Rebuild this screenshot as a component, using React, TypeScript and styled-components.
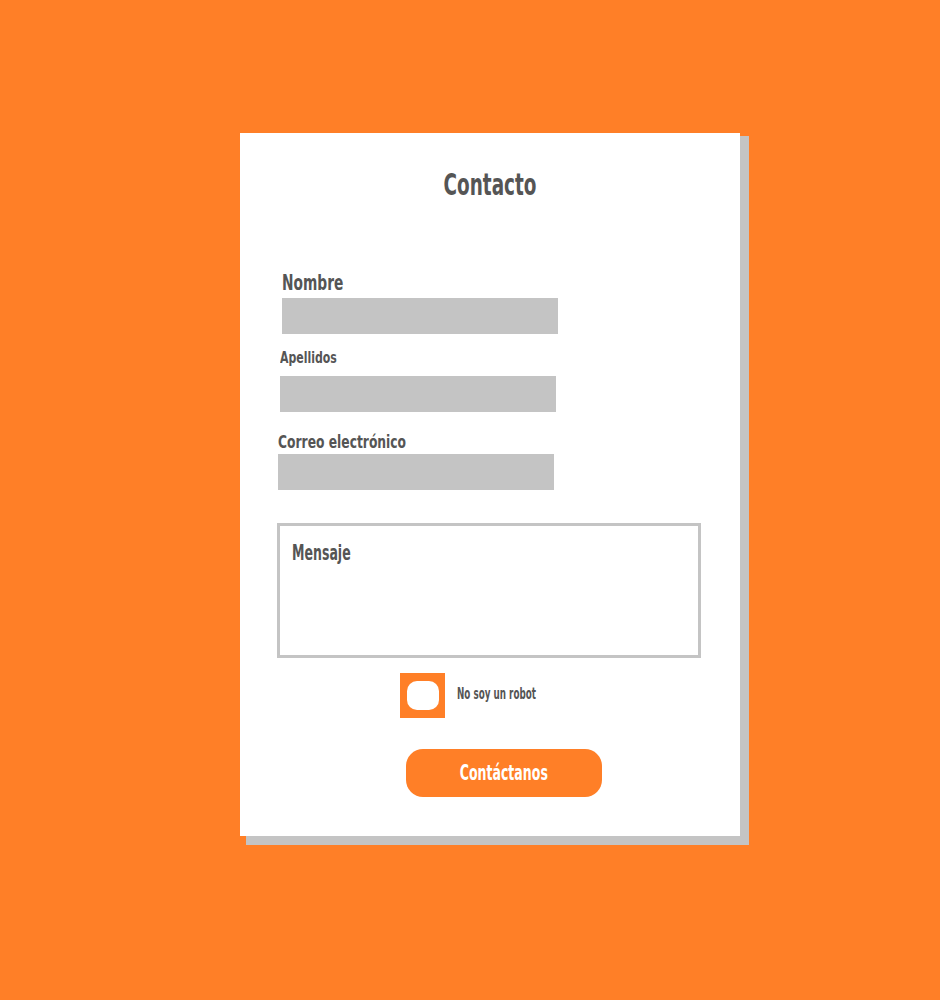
import React from "react";
import styled, { createGlobalStyle } from "styled-components";

const Global = createGlobalStyle`
  html, body { margin: 0; padding: 0; }
  body { background: #ff7f27; width: 940px; height: 1000px; overflow: hidden; }
`;

const FONT = `"DejaVu Sans Condensed", "DejaVu Sans", sans-serif`;

const Page = styled.div`
  position: relative;
  z-index: 0;
  width: 940px;
  height: 1000px;
  background: #ff7f27;
  padding-top: 133px;
  padding-left: 240px;
  box-sizing: border-box;
`;

const Card = styled.div`
  position: relative;
  width: 500px;
  height: 703px;
  background: #ffffff;
  box-sizing: border-box;
  padding-top: 36px;
  font-family: ${FONT};
  color: #555555;
  display: flex;
  flex-direction: column;
  align-items: flex-start;
  &::before {
    content: "";
    position: absolute;
    top: 3px;
    left: 6px;
    right: -9px;
    bottom: -9px;
    background: #c4c4c4;
    z-index: -1;
  }
`;

const Title = styled.h1`
  align-self: stretch;
  margin: 0;
  font-size: 31px;
  font-weight: 700;
  text-align: center;
  line-height: 1;
  transform: scaleX(0.66);
`;

const Field = styled.div<{ $x: number; $mt: number }>`
  display: flex;
  flex-direction: column;
  align-items: flex-start;
  margin-left: ${(p) => p.$x}px;
  margin-top: ${(p) => p.$mt}px;
`;

const Label = styled.label<{ $size: number; $gap: number; $sx: number }>`
  display: block;
  font-size: ${(p) => p.$size}px;
  font-weight: 700;
  line-height: 1;
  margin-bottom: ${(p) => p.$gap}px;
  transform: scaleX(${(p) => p.$sx});
  transform-origin: left center;
  white-space: nowrap;
`;

const Input = styled.div`
  width: 276px;
  height: 36px;
  background: #c4c4c4;
`;

const Message = styled.div`
  margin: 33px 0 0 37px;
  width: 424px;
  height: 135px;
  border: 3px solid #c4c4c4;
  box-sizing: border-box;
  padding: 17px 0 0 12px;
`;

const MessageLabel = styled.span`
  display: block;
  font-size: 20.5px;
  line-height: 1;
  font-weight: 700;
  transform: scaleX(0.68);
  transform-origin: left center;
`;

const RobotRow = styled.div`
  display: flex;
  align-items: center;
  margin: 15px 0 0 160px;
  gap: 12px;
`;

const CheckBox = styled.div`
  width: 45px;
  height: 45px;
  background: #ff7f27;
  display: flex;
  align-items: center;
  justify-content: center;
`;

const CheckInner = styled.div`
  width: 32px;
  height: 29px;
  border-radius: 10px;
  background: #ffffff;
`;

const RobotText = styled.span`
  font-size: 15.5px;
  line-height: 1;
  font-weight: 700;
  transform: scaleX(0.63);
  transform-origin: left center;
  white-space: nowrap;
`;

const Button = styled.button`
  margin: 31px 0 0 166px;
  width: 196px;
  height: 48px;
  border: none;
  border-radius: 17px;
  background: #ff7f27;
  color: #ffffff;
  font-family: ${FONT};
  font-size: 20.5px;
  font-weight: 700;
  padding: 0;
  display: flex;
  align-items: center;
  justify-content: center;
`;

const ButtonText = styled.span`
  display: inline-block;
  transform: scaleX(0.68);
`;

export default function App() {
  return (
    <>
      <Global />
      <Page>
        <Card>
          <Title>Contacto</Title>
          <Field $x={42} $mt={72}>
            <Label $size={22} $gap={4} $sx={0.695}>Nombre</Label>
            <Input />
          </Field>
          <Field $x={40} $mt={16}>
            <Label $size={16.5} $gap={9} $sx={0.737}>Apellidos</Label>
            <Input />
          </Field>
          <Field $x={38} $mt={21}>
            <Label $size={18} $gap={3} $sx={0.76}>Correo electrónico</Label>
            <Input />
          </Field>
          <Message>
            <MessageLabel>Mensaje</MessageLabel>
          </Message>
          <RobotRow>
            <CheckBox>
              <CheckInner />
            </CheckBox>
            <RobotText>No soy un robot</RobotText>
          </RobotRow>
          <Button>
            <ButtonText>Contáctanos</ButtonText>
          </Button>
        </Card>
      </Page>
    </>
  );
}
